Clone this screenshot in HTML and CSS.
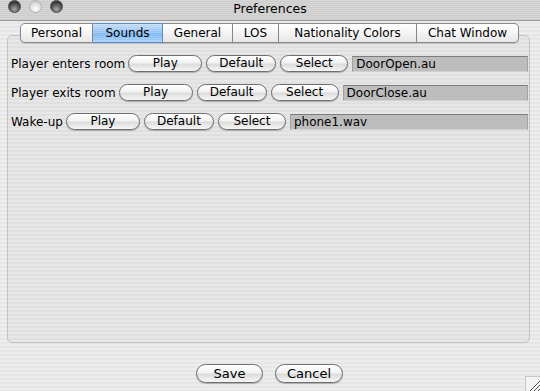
FILE: index.html
```html
<!DOCTYPE html>
<html lang="en">
<head>
    <meta charset="UTF-8">
    <title>Preferences</title>
    <link rel="stylesheet" href="styles.css">
</head>
<body>

    <div class="window">
        <div class="titlebar">
            <div class="lights">
                <span class="light dark"></span>
                <span class="light pale"></span>
                <span class="light dark"></span>
            </div>
            <div class="title">Preferences</div>
            <div></div>
        </div>

        <div class="content">
            <div class="tabs">
                <div class="tab first w-personal">Personal</div>
                <div class="tab selected w-sounds">Sounds</div>
                <div class="tab w-general">General</div>
                <div class="tab w-los">LOS</div>
                <div class="tab w-nat">Nationality Colors</div>
                <div class="tab last w-chat">Chat Window</div>
            </div>

            <div class="panel">
                <div class="row">
                    <span class="label">Player enters room</span>
                    <button class="btn btn-play">Play</button>
                    <button class="btn btn-default">Default</button>
                    <button class="btn btn-select">Select</button>
                    <div class="field">DoorOpen.au</div>
                </div>
                <div class="row">
                    <span class="label">Player exits room</span>
                    <button class="btn btn-play">Play</button>
                    <button class="btn btn-default">Default</button>
                    <button class="btn btn-select">Select</button>
                    <div class="field">DoorClose.au</div>
                </div>
                <div class="row">
                    <span class="label">Wake-up</span>
                    <button class="btn btn-play">Play</button>
                    <button class="btn btn-default">Default</button>
                    <button class="btn btn-select">Select</button>
                    <div class="field">phone1.wav</div>
                </div>
            </div>

            <div class="actions">
                <button class="btn btn-big btn-save">Save</button>
                <button class="btn btn-big btn-cancel">Cancel</button>
            </div>
        </div>

        <div class="grip">
            <svg width="15" height="15" viewBox="0 0 15 15">
                <line x1="14" y1="4" x2="4" y2="14" stroke="#555" stroke-width="1"/>
                <line x1="14" y1="8" x2="8" y2="14" stroke="#555" stroke-width="1"/>
                <line x1="14" y1="12" x2="12" y2="14" stroke="#555" stroke-width="1"/>
            </svg>
        </div>
    </div>

</body>
</html>
```

FILE: styles.css
```css
* {
    margin: 0;
    padding: 0;
    box-sizing: border-box;
}

body {
    font-family: 'DejaVu Sans', sans-serif;
    font-size: 12px;
    color: #000;
    width: 540px;
    height: 391px;
    overflow: hidden;
}

.window {
    position: relative;
    width: 540px;
    height: 391px;
    display: flex;
    flex-direction: column;
    background: repeating-linear-gradient(#ededed 0, #ededed 2px, #e6e6e6 2px, #e6e6e6 4px);
}

/* title bar */

.titlebar {
    height: 21px;
    display: grid;
    grid-template-columns: 1fr auto 1fr;
    align-items: start;
    background: repeating-linear-gradient(#d6d6d6 0, #d6d6d6 1px, #cdcdcd 1px, #cdcdcd 2px);
    border-bottom: 1px solid #9a9a9a;
}

.lights {
    display: flex;
    gap: 8px;
    padding-left: 8px;
}

.light {
    width: 13px;
    height: 13px;
    border-radius: 50%;
    border: 1px solid #4a4a4a;
}

.light.dark {
    background: radial-gradient(circle at 50% 75%, #a8a8a8 0, #666 40%, #333 75%);
}

.light.pale {
    border-color: #b4b4b4;
    background: radial-gradient(circle at 50% 70%, #ffffff 0, #e4e4e4 45%, #c4c4c4 85%);
}

.title {
    font-size: 12.5px;
    line-height: 17px;
}

/* tabs */

.content {
    flex: 1;
    display: flex;
    flex-direction: column;
    padding-top: 2px;
}

.tabs {
    position: relative;
    z-index: 1;
    display: flex;
    margin-left: 20px;
    height: 20px;
}

.tab {
    height: 20px;
    line-height: 18px;
    text-align: center;
    border: 1px solid #8a8a8a;
    border-left: none;
    background: linear-gradient(#ffffff, #f4f4f4 50%, #e6e6e6);
    box-shadow: 0 1px 1px rgba(0, 0, 0, 0.15);
}

.tab.first {
    border-left: 1px solid #8a8a8a;
    border-radius: 5px 0 0 5px;
}

.tab.last {
    border-radius: 0 5px 5px 0;
}

.tab.selected {
    background: repeating-linear-gradient(rgba(255, 255, 255, 0.18) 0, rgba(255, 255, 255, 0.18) 1px, transparent 1px, transparent 2px),
        linear-gradient(#c3dcf8, #8fbff2 50%, #78b3f0 55%, #a7d0fb);
    border-color: #5f8fc8;
}

.w-personal { width: 73px; }
.w-sounds { width: 70px; }
.w-general { width: 70px; }
.w-los { width: 46px; }
.w-nat { width: 138px; }
.w-chat { width: 102px; }

/* panel */

.panel {
    margin: -8px 10px 0 7px;
    height: 308px;
    border: 1px solid #c2c2c2;
    border-radius: 5px;
    background: rgba(0, 0, 0, 0.025);
    padding: 19px 1px 0 3px;
    display: flex;
    flex-direction: column;
    gap: 12px;
}

.row {
    display: flex;
    align-items: center;
    gap: 4px;
    height: 17px;
}

.label {
    white-space: nowrap;
    margin-right: -1px;
}

.btn {
    font-family: 'DejaVu Sans', sans-serif;
    font-size: 12px;
    color: #000;
    height: 17px;
    line-height: 15px;
    border: 1px solid #6e6e6e;
    border-radius: 9px;
    background: linear-gradient(#ffffff, #f2f2f2 45%, #dcdcdc 55%, #f6f6f6);
    box-shadow: 0 1px 1px rgba(0, 0, 0, 0.25);
    text-align: center;
    flex-shrink: 0;
}

.btn-play { width: 74px; }
.btn-default { width: 70px; }
.btn-select { width: 68px; }

.field {
    flex: 1;
    height: 16px;
    line-height: 14px;
    padding-left: 3px;
    background: #bdbdbd;
    border: 1px solid #a2a2a2;
    border-top-color: #7c7c7c;
    border-bottom-color: #d0d0d0;
}

/* bottom buttons */

.actions {
    display: flex;
    justify-content: center;
    gap: 12px;
    margin-top: 21px;
    padding-right: 1px;
}

.btn-big {
    height: 19px;
    line-height: 17px;
    font-size: 13px;
    border-radius: 10px;
}

.btn-save { width: 67px; }
.btn-cancel { width: 68px; }

.grip {
    position: absolute;
    right: 0;
    bottom: 0;
    width: 15px;
    height: 15px;
    background: #f4f4f4;
    border-left: 1px solid #c8c8c8;
    border-top: 1px solid #c8c8c8;
}

.grip svg {
    display: block;
}
```
